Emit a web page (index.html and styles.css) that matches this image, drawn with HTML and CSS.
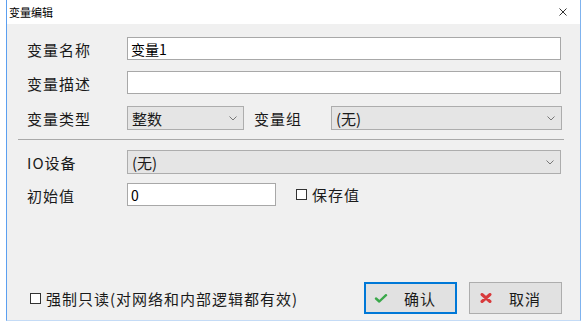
FILE: index.html
```html
<!DOCTYPE html>
<html lang="zh-CN">
<head>
    <meta charset="UTF-8">
    <title>变量编辑</title>
    <link rel="stylesheet" href="styles.css">
</head>
<body>

    <div class="window">
        <div class="titlebar">
            <span class="title">变量编辑</span>
            <svg class="close" width="8" height="8" viewBox="0 0 8 8">
                <path d="M0.5 0.5 L7.5 7.5 M7.5 0.5 L0.5 7.5" stroke="#333" stroke-width="1" fill="none"/>
            </svg>
        </div>
        <div class="content">
            <div class="row row-name">
                <label class="label">变量名称</label>
                <input class="field field-wide" type="text" value="变量1" />
            </div>
            <div class="row row-desc">
                <label class="label">变量描述</label>
                <input class="field field-wide" type="text" value="" />
            </div>
            <div class="row row-type">
                <label class="label">变量类型</label>
                <div class="combo combo-type">
                    <span>整数</span>
                    <svg class="chev" width="8" height="5" viewBox="0 0 8 5"><path d="M0.5 0.5 L4 4 L7.5 0.5" stroke="#777" fill="none"/></svg>
                </div>
                <label class="label label-group">变量组</label>
                <div class="combo combo-group">
                    <span>(无)</span>
                    <svg class="chev" width="8" height="5" viewBox="0 0 8 5"><path d="M0.5 0.5 L4 4 L7.5 0.5" stroke="#777" fill="none"/></svg>
                </div>
            </div>
            <div class="sep"></div>
            <div class="row row-io">
                <label class="label">IO设备</label>
                <div class="combo combo-io">
                    <span>(无)</span>
                    <svg class="chev" width="8" height="5" viewBox="0 0 8 5"><path d="M0.5 0.5 L4 4 L7.5 0.5" stroke="#777" fill="none"/></svg>
                </div>
            </div>
            <div class="row row-init">
                <label class="label">初始值</label>
                <input class="field field-init" type="text" value="0" />
                <span class="check check-save"><span class="box"></span>保存值</span>
            </div>
            <div class="footer">
                <span class="check check-readonly"><span class="box"></span>强制只读(对网络和内部逻辑都有效)</span>
                <div class="buttons">
                    <div class="btn btn-default">
                        <svg class="btn-icon" width="13" height="9" viewBox="0 0 13 9">
                            <path d="M1.5 4.5 L4.8 7.5 L11.5 1.2" stroke="#3aa84a" stroke-width="2.4" fill="none" stroke-linecap="round" stroke-linejoin="round"/>
                        </svg>
                        <span class="btn-text">确认</span>
                    </div>
                    <div class="btn">
                        <svg class="btn-icon" width="12" height="10" viewBox="0 0 12 10">
                            <path d="M2 1.5 L10 8.5 M10 1.5 L2 8.5" stroke="#d83a3c" stroke-width="3" fill="none" stroke-linecap="round"/>
                        </svg>
                        <span class="btn-text">取消</span>
                    </div>
                </div>
            </div>
        </div>
    </div>

</body>
</html>
```

FILE: styles.css
```css
html, body {
    margin: 0;
    padding: 0;
    background: #ffffff;
}
body {
    font-family: "Noto Sans CJK SC", "Noto Sans", sans-serif;
    color: #1a1a1a;
}
.window {
    margin-left: 6px;
    width: 573px;
    height: 320px;
    border-left: 1px solid #5b9ff0;
    border-right: 1px solid #7fb3ef;
    border-bottom: 1px solid #c4dbf6;
    display: flex;
    flex-direction: column;
}
.titlebar {
    height: 24px;
    background: #ffffff;
    display: flex;
    align-items: center;
    justify-content: space-between;
    padding: 0 13px 0 2px;
}
.title {
    font-size: 11px;
    line-height: 24px;
    color: #000;
}
.close {
    display: block;
}
.content {
    flex: 1;
    background: #f0f0f0;
    padding: 13px 18px 6px 20px;
    display: flex;
    flex-direction: column;
}
.row {
    display: flex;
    align-items: center;
}
.row-name { height: 23px; }
.row-desc { height: 23px; margin-top: 11px; }
.row-type { height: 24px; margin-top: 12px; }
.row-io { height: 24px; margin-top: 10px; }
.row-init { height: 23px; margin-top: 9px; }
.label {
    width: 100px;
    flex: none;
    font-size: 15px;
    letter-spacing: 1px;
    line-height: 20px;
    padding-top: 2px;
}
.label-group {
    width: 77px;
    margin-left: 10px;
}
.field {
    box-sizing: border-box;
    height: 23px;
    border: 1px solid #a8a8a8;
    background: #ffffff;
    font-family: inherit;
    font-size: 14px;
    padding: 0 3px;
    margin: 0;
    color: #000;
    outline: none;
}
.field-wide {
    width: 434px;
}
.field-init {
    width: 149px;
}
.combo {
    box-sizing: border-box;
    height: 24px;
    border: 1px solid #adadad;
    background: #e5e5e5;
    display: flex;
    align-items: center;
    justify-content: space-between;
    padding: 0 6px 0 4px;
    font-size: 15px;
}
.combo-type { width: 117px; }
.combo-group { width: 231px; }
.combo-io { width: 434px; }
.chev {
    display: block;
}
.sep {
    height: 1px;
    background: #a9a9a9;
    margin: 9px -2px 0 -9px;
}
.check {
    display: flex;
    align-items: center;
    font-size: 15px;
    letter-spacing: 1px;
}
.box {
    box-sizing: border-box;
    width: 11px;
    height: 11px;
    border: 1px solid #333;
    background: #ffffff;
    margin-right: 5px;
}
.check-save {
    margin-left: 20px;
}
.footer {
    margin-top: auto;
    display: flex;
    align-items: center;
    justify-content: space-between;
    padding-left: 3px;
}
.buttons {
    display: flex;
    gap: 12px;
}
.btn {
    box-sizing: border-box;
    width: 93px;
    height: 32px;
    border: 1px solid #adadad;
    background: #e1e1e1;
    display: flex;
    align-items: center;
    padding-left: 5px;
}
.btn-default {
    border: 2px solid #0078d7;
    padding-left: 4px;
}
.btn-icon {
    display: block;
    width: 22px;
}
.btn-text {
    margin-left: 12px;
    font-size: 15px;
    letter-spacing: 1px;
}
```
